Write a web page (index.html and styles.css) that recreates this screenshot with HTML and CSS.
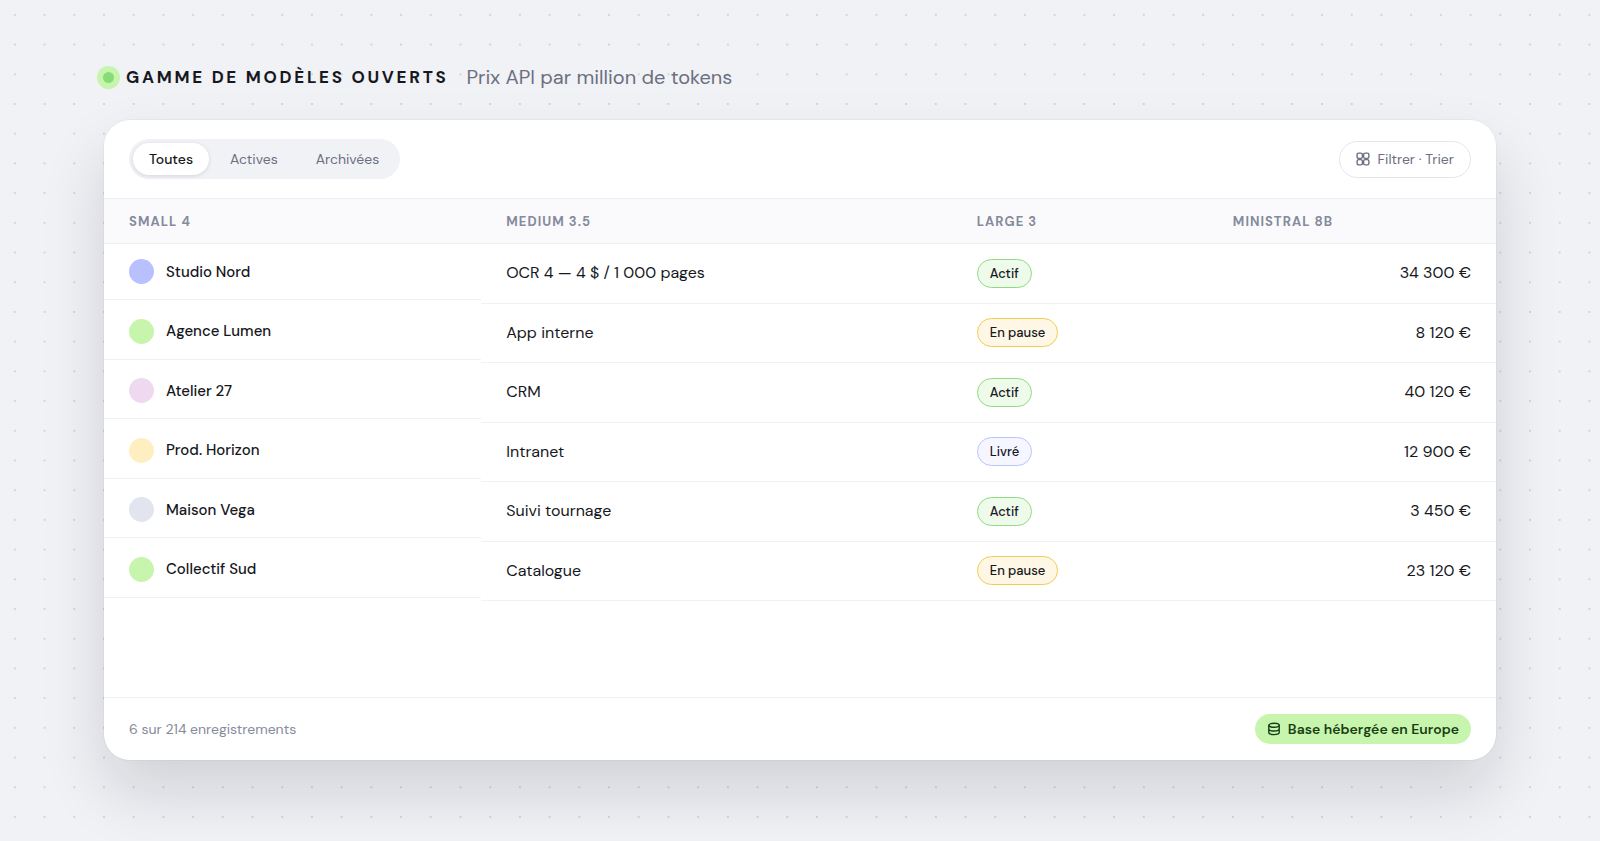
FILE: index.html
```html
<!DOCTYPE html>
<html lang="fr">
<head>
<meta charset="utf-8">
<meta name="viewport" content="width=device-width, initial-scale=1">
<title>Gamme de modèles ouverts</title>
<link rel="stylesheet" href="styles.css">
</head>
<body>
<svg class="dots" viewBox="0 0 1508 793" preserveAspectRatio="xMinYMin slice" aria-hidden="true">
  <defs><pattern id="grid" width="28" height="28" patternUnits="userSpaceOnUse"><circle cx="14" cy="14" r="1"/></pattern></defs>
  <rect width="1508" height="793" fill="url(#grid)"/>
</svg>
<main class="page">
  <header class="heading">
    <span class="status-dot"></span>
    <h1>Gamme de modèles ouverts</h1>
    <p>Prix API par million de tokens</p>
  </header>
  <section class="card">
    <div class="toolbar">
      <div class="tabs">
        <button type="button" class="tab active">Toutes</button>
        <button type="button" class="tab">Actives</button>
        <button type="button" class="tab">Archivées</button>
      </div>
      <button type="button" class="filter">
        <svg class="icon" viewBox="0 0 14 14" aria-hidden="true"><rect x="1.1" y="1.1" width="5.3" height="5.3" rx="1.6"/><rect x="7.6" y="1.1" width="5.3" height="5.3" rx="1.6"/><rect x="1.1" y="7.6" width="5.3" height="5.3" rx="1.6"/><rect x="7.6" y="7.6" width="5.3" height="5.3" rx="1.6"/></svg>
        <span>Filtrer · Trier</span>
      </button>
    </div>
    <table>
      <colgroup><col class="c1"><col class="c2"><col class="c3"><col class="c4"></colgroup>
      <thead><tr><th scope="col">Small 4</th><th scope="col">Medium 3.5</th><th scope="col">Large 3</th><th scope="col">Ministral 8B</th></tr></thead>
      <tbody>
        <tr><td class="name"><div class="client"><i class="avatar indigo"></i>Studio Nord</div></td><td>OCR 4 — 4 $ / 1 000 pages</td><td><span class="pill green">Actif</span></td><td class="amount">34 300 €</td></tr>
        <tr><td class="name"><div class="client"><i class="avatar lime"></i>Agence Lumen</div></td><td>App interne</td><td><span class="pill amber">En pause</span></td><td class="amount">8 120 €</td></tr>
        <tr><td class="name"><div class="client"><i class="avatar pink"></i>Atelier 27</div></td><td>CRM</td><td><span class="pill green">Actif</span></td><td class="amount">40 120 €</td></tr>
        <tr><td class="name"><div class="client"><i class="avatar yellow"></i>Prod. Horizon</div></td><td>Intranet</td><td><span class="pill violet">Livré</span></td><td class="amount">12 900 €</td></tr>
        <tr><td class="name"><div class="client"><i class="avatar gray"></i>Maison Vega</div></td><td>Suivi tournage</td><td><span class="pill green">Actif</span></td><td class="amount">3 450 €</td></tr>
        <tr><td class="name"><div class="client"><i class="avatar lime"></i>Collectif Sud</div></td><td>Catalogue</td><td><span class="pill amber">En pause</span></td><td class="amount">23 120 €</td></tr>
      </tbody>
    </table>
    <footer class="footer">
      <span>6 sur 214 enregistrements</span>
      <span class="badge">
        <svg class="icon" viewBox="0 0 14 14" aria-hidden="true"><ellipse cx="7" cy="3.2" rx="5.2" ry="2"/><path d="M1.8 3.2v7.4c0 1.1 2.3 2 5.2 2s5.2-.9 5.2-2V3.2M1.8 7c0 1.1 2.3 2 5.2 2s5.2-.9 5.2-2"/></svg>
        Base hébergée en Europe
      </span>
    </footer>
  </section>
</main>
</body>
</html>
```
FILE: styles.css
```css
* { box-sizing: border-box; }
body {
  margin: 0;
  background: #f1f2f6;
  color: #16181d;
  font-family: "DM Sans", Inter, "Noto Sans", sans-serif;
  font-size: 16px;
  line-height: 20px;
}
button { font: inherit; cursor: pointer; }
.dots { position: absolute; inset: 0; width: 100%; height: 100%; fill: #cdcfd6; }
.page {
  position: relative;
  display: flex;
  flex-direction: column;
  gap: 29px;
  min-height: 100vh;
  padding: 63px 6.5% 81px;
}
.heading { display: flex; align-items: center; height: 28px; }
.status-dot { width: 11px; height: 11px; margin-left: -1px; border-radius: 50%; background: #86dc76; box-shadow: 0 0 0 6px #c8f5ae; }
h1 { margin: 0 18px 0 12px; font-size: 17px; font-weight: 700; letter-spacing: 0.16em; text-transform: uppercase; }
.heading p { margin: 0; font-size: 20px; color: #6b6f80; }
.card {
  flex: 1;
  display: flex;
  flex-direction: column;
  overflow: hidden;
  border-radius: 26px;
  background: #fff;
  box-shadow: 0 0 0 1px rgba(20, 24, 40, 0.03), 0 32px 64px rgba(15, 17, 21, 0.14);
}
.toolbar {
  display: flex;
  align-items: center;
  justify-content: space-between;
  height: 79px;
  padding: 0 25px;
  border-bottom: 1px solid #eeeff3;
}
.tabs { display: flex; gap: 4px; padding: 4px; border-radius: 20px; background: #f1f2f6; }
.tab { height: 32px; padding: 0 17px; border: 0; border-radius: 16px; background: none; color: #6b6f80; font-size: 14px; }
.tab.active { padding: 0 16px; background: #fff; color: #16181d; font-weight: 500; box-shadow: 0 1px 4px rgba(15, 17, 21, 0.12); }
.filter {
  display: flex;
  align-items: center;
  gap: 8px;
  height: 37px;
  padding: 0 16px;
  border: 1px solid #e4e5ea;
  border-radius: 19px;
  background: #fff;
  color: #6b6f80;
  font-size: 14px;
}
.icon { width: 14px; height: 14px; fill: none; stroke: currentColor; stroke-width: 1.4; }
table { width: 100%; height: 402px; table-layout: fixed; border-collapse: separate; border-spacing: 0; }
.c1 { width: 27.1%; }
.c2 { width: 33.8%; }
.c3 { width: 18.4%; }
th {
  height: 45px;
  padding: 1px 25px 0;
  border-bottom: 1px solid #eeeff3;
  background: #fafafc;
  color: #858a9c;
  font-size: 13px;
  font-weight: 700;
  letter-spacing: 0.08em;
  text-align: left;
  text-transform: uppercase;
}
td { padding: 0 25px; border-bottom: 1px solid #f1f2f5; vertical-align: middle; }
td.name { padding: 0; border: 0; vertical-align: top; }
.client { display: flex; align-items: center; gap: 12px; height: 56px; padding: 0 25px; border-bottom: 1px solid #f1f2f5; font-size: 15px; font-weight: 500; }
.avatar { width: 25px; height: 25px; border-radius: 50%; }
.indigo { background: #b8c0ff; }
.lime { background: #c8f5ae; }
.pink { background: #eed9f0; }
.yellow { background: #ffefc0; }
.gray { background: #e2e5ef; }
.amount { text-align: right; }
.pill { display: inline-block; padding: 3px 12px; border: 1px solid; border-radius: 15px; font-size: 13px; line-height: 21px; font-weight: 500; }
.green { border-color: #8fdc80; background: #eefbeb; }
.amber { border-color: #f2cc52; background: #fff7e5; }
.violet { border-color: #bcc3fb; background: #f5f6ff; }
.pill { color: #16181d; }
.footer {
  display: flex;
  align-items: center;
  justify-content: space-between;
  height: 63px;
  margin-top: auto;
  padding: 0 25px;
  border-top: 1px solid #eeeff3;
  color: #858a9c;
  font-size: 14px;
}
.badge { display: flex; align-items: center; gap: 7px; height: 30px; padding: 0 12px; border-radius: 15px; background: #c8f5ae; color: #173d12; font-weight: 600; }
```
